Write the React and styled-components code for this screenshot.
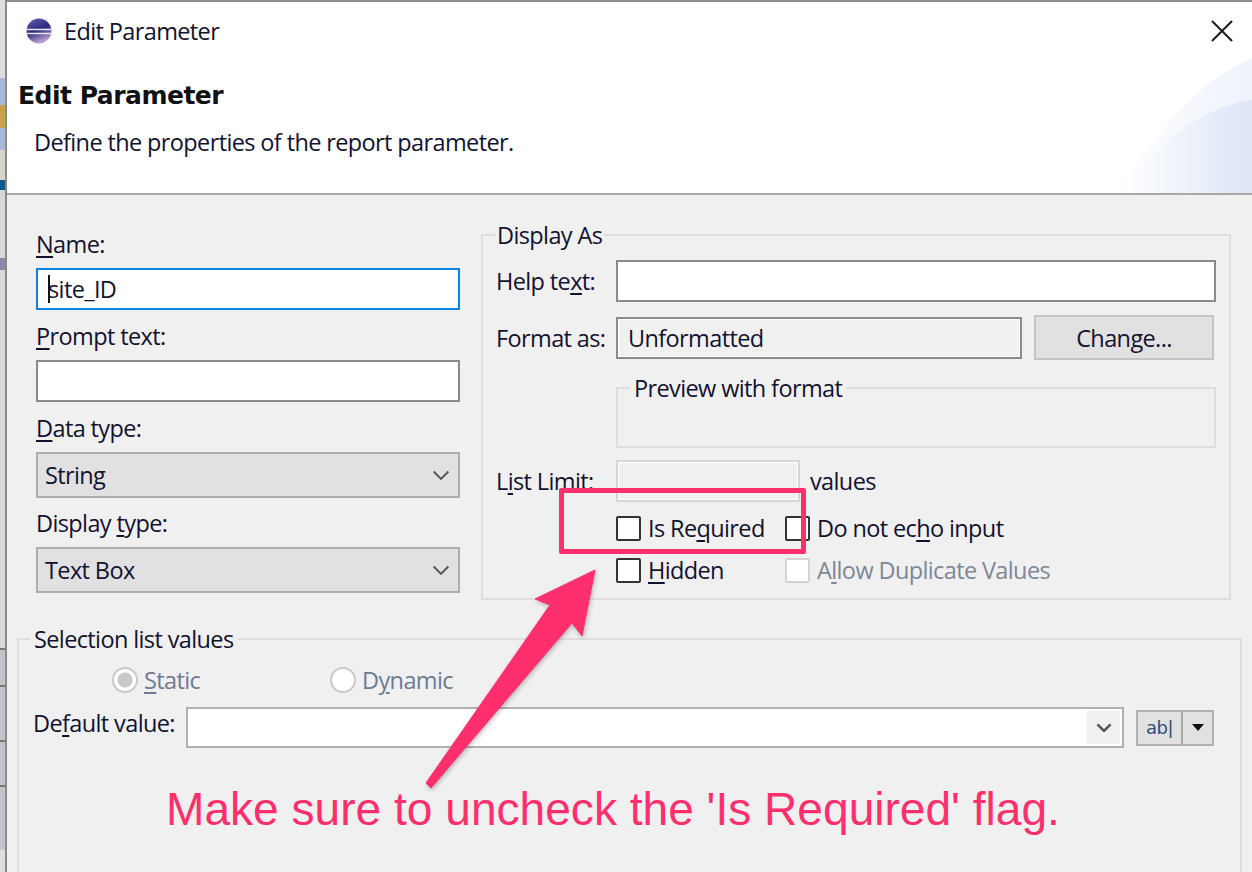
import React from 'react';
import styled, { createGlobalStyle } from 'styled-components';

const GlobalStyle = createGlobalStyle`
  html, body { margin: 0; padding: 0; background: #f0f0f0; }
  * { box-sizing: border-box; }
`;

const PINK = '#ff2f6d';

const Screen = styled.div`
  position: relative;
  width: 1252px;
  height: 872px;
  overflow: hidden;
  display: flex;
  font-family: 'Open Sans', 'Noto Sans', sans-serif;
  font-size: 23.5px;
  letter-spacing: -0.62px;
  color: #12122e;
`;

const BehindWindow = styled.div`
  width: 5px;
  flex: none;
  background: linear-gradient(
    #dedede 0 78px,
    #a8b8d8 78px 105px,
    #c9a050 105px 128px,
    #a8b8d8 128px 150px,
    #d8d4c8 150px 180px,
    #0a5a8a 180px 190px,
    #d8d8d8 190px 258px,
    #8a8aa8 258px 270px,
    #d8d8d8 270px 648px,
    #777 648px 650px,
    #c4c4cc 650px 685px,
    #777 685px 687px,
    #c4c4cc 687px 740px,
    #777 740px 742px,
    #c4c4cc 742px 785px,
    #777 785px 787px,
    #c4c4cc 787px 850px,
    #dedede 850px
  );
`;

const Dialog = styled.div`
  flex: 1;
  display: flex;
  flex-direction: column;
  border-left: 2px solid #8a8a8a;
  border-right: 1px solid #a0a0a0;
`;

const Header = styled.header`
  position: relative;
  height: 195px;
  flex: none;
  background: #fff;
  border-top: 2px solid #8f8f8f;
  border-bottom: 2px solid #a8a8a8;
  overflow: hidden;
`;

const TitleBar = styled.div`
  display: flex;
  align-items: center;
  height: 56px;
  padding: 1px 19px 0 17px;
`;

const TitleText = styled.span`
  margin-left: 10px;
  flex: 1;
`;

const BannerTitle = styled.h1`
  margin: 0;
  padding: 20px 0 0 11px;
  font: bold 25px/36px 'DejaVu Sans', sans-serif;
  letter-spacing: -0.5px;
  color: #111;
`;

const BannerText = styled.p`
  margin: 0;
  padding: 13px 0 0 27px;
  line-height: 30px;
`;

const BannerArt = styled.svg`
  position: absolute;
  right: 0;
  bottom: 0;
`;

const Body = styled.div`
  flex: 1;
  display: flex;
  flex-direction: column;
  padding: 34px 10px 0;
`;

const Columns = styled.div`
  display: flex;
  align-items: flex-start;
`;

const LeftColumn = styled.div`
  width: 464px;
  flex: none;
  padding: 0 21px 0 19px;
  display: flex;
  flex-direction: column;
`;

const FieldLabel = styled.label`
  display: block;
  height: 39px;
  line-height: 30px;
  white-space: nowrap;
`;

const Key = styled.span`
  text-decoration: underline;
  text-underline-offset: 3px;
  text-decoration-thickness: 2px;
`;

const TextBox = styled.div`
  display: flex;
  align-items: center;
  height: ${(props) => props.$height || 42}px;
  width: ${(props) => (props.$width ? `${props.$width}px` : '100%')};
  margin-bottom: ${(props) => props.$gap || 0}px;
  padding-left: 10px;
  flex: none;
  background: ${(props) => (props.$readonly ? '#f0f0f0' : '#fff')};
  border: 2px solid ${(props) => {
    if (props.$focused) return '#0a84e0';
    return props.$muted ? '#d6d6d6' : '#8a8a8a';
  }};
  box-shadow: ${(props) => (props.$readonly ? 'inset 0 0 0 1px #fff' : 'none')};
`;

const WideBox = styled(TextBox)`
  flex: 1;
`;

const Caret = styled.span`
  width: 2px;
  height: 28px;
  margin-right: -2px;
  background: #111;
  flex: none;
`;

const Select = styled.div`
  display: flex;
  align-items: center;
  justify-content: space-between;
  height: 46px;
  margin-bottom: 10px;
  padding: 0 8px 0 7px;
  background: #e1e1e1;
  border: 2px solid #adadad;
`;

const Group = styled.fieldset`
  margin: 0;
  min-width: 0;
  padding: ${(props) => props.$padding || '0'};
  border: 2px solid #dedede;
`;

const Legend = styled.legend`
  margin-left: ${(props) => props.$indent || 0}px;
  padding: 0 ${(props) => (props.$tight ? 2 : 4)}px;
  line-height: 30px;
  height: 30px;
`;

const DisplayAs = styled(Group)`
  width: 750px;
  height: 380px;
  margin-top: -9px;
`;

const Selection = styled(Group)`
  width: 1225px;
  height: 260px;
  margin-top: 21px;
`;

const Row = styled.div`
  display: flex;
  align-items: center;
  height: ${(props) => props.$height}px;
  margin-top: ${(props) => props.$top || 0}px;
`;

const RowLabel = styled.span`
  width: 120px;
  flex: none;
  white-space: nowrap;
`;

const ChangeButton = styled.div`
  display: flex;
  align-items: center;
  justify-content: center;
  width: 180px;
  height: 45px;
  margin-left: 12px;
  background: #e1e1e1;
  border: 2px solid #c4c4c4;
`;

const Preview = styled(Group)`
  margin: 13px 0 0 120px;
  width: 600px;
  height: 75px;
`;

const Values = styled.span`
  margin-left: 10px;
`;

const CheckRow = styled.div`
  display: flex;
  align-items: center;
  height: 26px;
  margin: ${(props) => props.$top}px 0 0 120px;
`;

const Check = styled.label`
  display: flex;
  align-items: center;
  width: ${(props) => props.$width || 'auto'};
  color: ${(props) => (props.$disabled ? '#7d8796' : 'inherit')};
`;

const Box = styled.span`
  width: 25px;
  height: 25px;
  margin-right: 7px;
  flex: none;
  background: #fff;
  border: 2px solid ${(props) => (props.$disabled ? '#d4d4d4' : '#333')};
  border-radius: 2px;
`;

const RadioRow = styled.div`
  display: flex;
  align-items: center;
  height: 30px;
  margin-top: 11px;
  padding-left: 93px;
  color: #6f7a90;
`;

const Radio = styled.label`
  display: flex;
  align-items: center;
  width: ${(props) => props.$width}px;
`;

const RadioDot = styled.span`
  width: 26px;
  height: 26px;
  margin-right: 6px;
  flex: none;
  border-radius: 50%;
  border: 2px solid #c9c9c9;
  background: ${(props) => (props.$on ? 'radial-gradient(circle, #c8c8c8 0 7px, #fff 8px)' : '#fff')};
`;

const DefaultRow = styled.div`
  display: flex;
  align-items: center;
  height: 41px;
  margin-top: 12px;
  padding-left: 14px;
`;

const DefaultLabel = styled.span`
  width: 153px;
  padding-bottom: 10px;
  flex: none;
  white-space: nowrap;
`;

const Combo = styled.div`
  display: flex;
  justify-content: flex-end;
  width: 938px;
  height: 41px;
  padding: 2px;
  flex: none;
  background: #fff;
  border: 2px solid #b0b0b0;
`;

const ComboArrow = styled.span`
  display: flex;
  align-items: center;
  justify-content: center;
  width: 33px;
  background: #f0f0f0;
`;

const SplitButton = styled.div`
  display: flex;
  width: 78px;
  height: 36px;
  margin-left: 12px;
  background: #e1e1e1;
  border: 2px solid #b0b0b0;
`;

const SplitMain = styled.span`
  flex: 1;
  display: flex;
  align-items: center;
  justify-content: center;
  border-right: 2px solid #a8a8a8;
  font-family: 'DejaVu Sans', sans-serif;
  font-size: 18px;
  letter-spacing: -0.5px;
  color: #2c4f7c;
`;

const SplitDrop = styled.span`
  width: 29px;
  display: flex;
  align-items: center;
  justify-content: center;
`;

const Highlight = styled.div`
  position: absolute;
  left: 559px;
  top: 488px;
  width: 247px;
  height: 66px;
  border: 5px solid ${PINK};
  border-radius: 2px;
`;

const Arrow = styled.svg`
  position: absolute;
  left: 0;
  top: 0;
  filter: drop-shadow(1px 2px 2px rgba(0, 0, 0, 0.25));
`;

const Callout = styled.div`
  position: absolute;
  left: 166px;
  top: 782px;
  font: 46.1px/54px 'Liberation Sans', Arial, sans-serif;
  letter-spacing: 0;
  color: ${PINK};
  white-space: nowrap;
`;

const Chevron = ({ size = 18, color = '#555', weight = 2 }) => (
  <svg width={size} height={size * 0.6} viewBox="0 0 18 11" fill="none">
    <path d="M1.5 1.5 L9 9 L16.5 1.5" stroke={color} strokeWidth={weight} />
  </svg>
);

const App = () => (
  <>
    <GlobalStyle />
    <Screen>
      <BehindWindow />
      <Dialog>
        <Header>
          <BannerArt width="150" height="135" viewBox="0 0 150 135">
            <defs>
              <linearGradient id="a" x1="0" x2="1" y1="0.5" y2="0.5">
                <stop offset="0" stopColor="#fff" />
                <stop offset="1" stopColor="#eef2fb" />
              </linearGradient>
              <linearGradient id="b" x1="0" x2="1" y1="0.5" y2="0.5">
                <stop offset="0" stopColor="#fff" />
                <stop offset="1" stopColor="#dce4f6" />
              </linearGradient>
            </defs>
            <path d="M10 135 C50 85 90 25 150 0 V135 Z" fill="url(#a)" />
            <path d="M20 135 C50 90 95 50 150 42 V135 Z" fill="url(#b)" />
          </BannerArt>
          <TitleBar>
            <svg width="30" height="26" viewBox="0 0 30 26">
              <defs>
                <linearGradient id="globe" x1="0" x2="0.4" y1="0" y2="1">
                  <stop offset="0" stopColor="#6f62b4" />
                  <stop offset="0.55" stopColor="#2c2a7c" />
                  <stop offset="1" stopColor="#b9a0cc" />
                </linearGradient>
              </defs>
              <circle cx="15" cy="13" r="12.5" fill="url(#globe)" />
              <path d="M2 11.5 H28 M2.5 15.5 H27.5" stroke="#e6e6f4" strokeWidth="1.6" />
            </svg>
            <TitleText>Edit Parameter</TitleText>
            <svg width="22" height="22" viewBox="0 0 22 22">
              <path d="M1 1 L21 21 M21 1 L1 21" stroke="#1a1a1a" strokeWidth="2" />
            </svg>
          </TitleBar>
          <BannerTitle>Edit Parameter</BannerTitle>
          <BannerText>Define the properties of the report parameter.</BannerText>
        </Header>
        <Body>
          <Columns>
            <LeftColumn>
              <FieldLabel><Key>N</Key>ame:</FieldLabel>
              <TextBox $focused $gap={11}><Caret />site_ID</TextBox>
              <FieldLabel><Key>P</Key>rompt text:</FieldLabel>
              <TextBox $gap={11} />
              <FieldLabel><Key>D</Key>ata type:</FieldLabel>
              <Select>String<Chevron /></Select>
              <FieldLabel>Display <Key>t</Key>ype:</FieldLabel>
              <Select>Text Box<Chevron /></Select>
            </LeftColumn>
            <DisplayAs $padding="0 13px 0 13px">
              <Legend $indent={-1} $tight>Display As</Legend>
              <Row $height={42} $top={10}>
                <RowLabel>Help te<Key>x</Key>t:</RowLabel>
                <WideBox />
              </Row>
              <Row $height={45} $top={13}>
                <RowLabel>Format as:</RowLabel>
                <TextBox $readonly $width={406}>Unformatted</TextBox>
                <ChangeButton>Chan<Key>g</Key>e...</ChangeButton>
              </Row>
              <Preview>
                <Legend $indent={12}>Preview with format</Legend>
              </Preview>
              <Row $height={42} $top={12}>
                <RowLabel>L<Key>i</Key>st Limit:</RowLabel>
                <TextBox $readonly $muted $width={184} />
                <Values>values</Values>
              </Row>
              <CheckRow $top={13}>
                <Check $width="169px"><Box />Is Re<Key>q</Key>uired</Check>
                <Check><Box />Do not ec<Key>h</Key>o input</Check>
              </CheckRow>
              <CheckRow $top={16}>
                <Check $width="169px"><Box /><Key>H</Key>idden</Check>
                <Check $disabled><Box $disabled />A<Key>l</Key>low Duplicate Values</Check>
              </CheckRow>
            </DisplayAs>
          </Columns>
          <Selection>
            <Legend $indent={11}>Selection list values</Legend>
            <RadioRow>
              <Radio $width={218}><RadioDot $on /><Key>S</Key>tatic</Radio>
              <Radio $width={200}><RadioDot />D<Key>y</Key>namic</Radio>
            </RadioRow>
            <DefaultRow>
              <DefaultLabel>De<Key>f</Key>ault value:</DefaultLabel>
              <Combo>
                <ComboArrow><Chevron size={16} color="#555" weight={3} /></ComboArrow>
              </Combo>
              <SplitButton>
                <SplitMain>ab|</SplitMain>
                <SplitDrop>
                  <svg width="12" height="7" viewBox="0 0 12 7"><path d="M0 0 H12 L6 7 Z" fill="#111" /></svg>
                </SplitDrop>
              </SplitButton>
            </DefaultRow>
          </Selection>
        </Body>
      </Dialog>
      <Highlight />
      <Arrow width="1252" height="872" viewBox="0 0 1252 872">
        <path d="M595 570 L535 599 L550 605 L426 783 L431 788 L572 623 L582 636 Z" fill={PINK} stroke={PINK} strokeLinejoin="round" />
      </Arrow>
      <Callout>Make sure to uncheck the 'Is Required' flag.</Callout>
    </Screen>
  </>
);

export default App;
